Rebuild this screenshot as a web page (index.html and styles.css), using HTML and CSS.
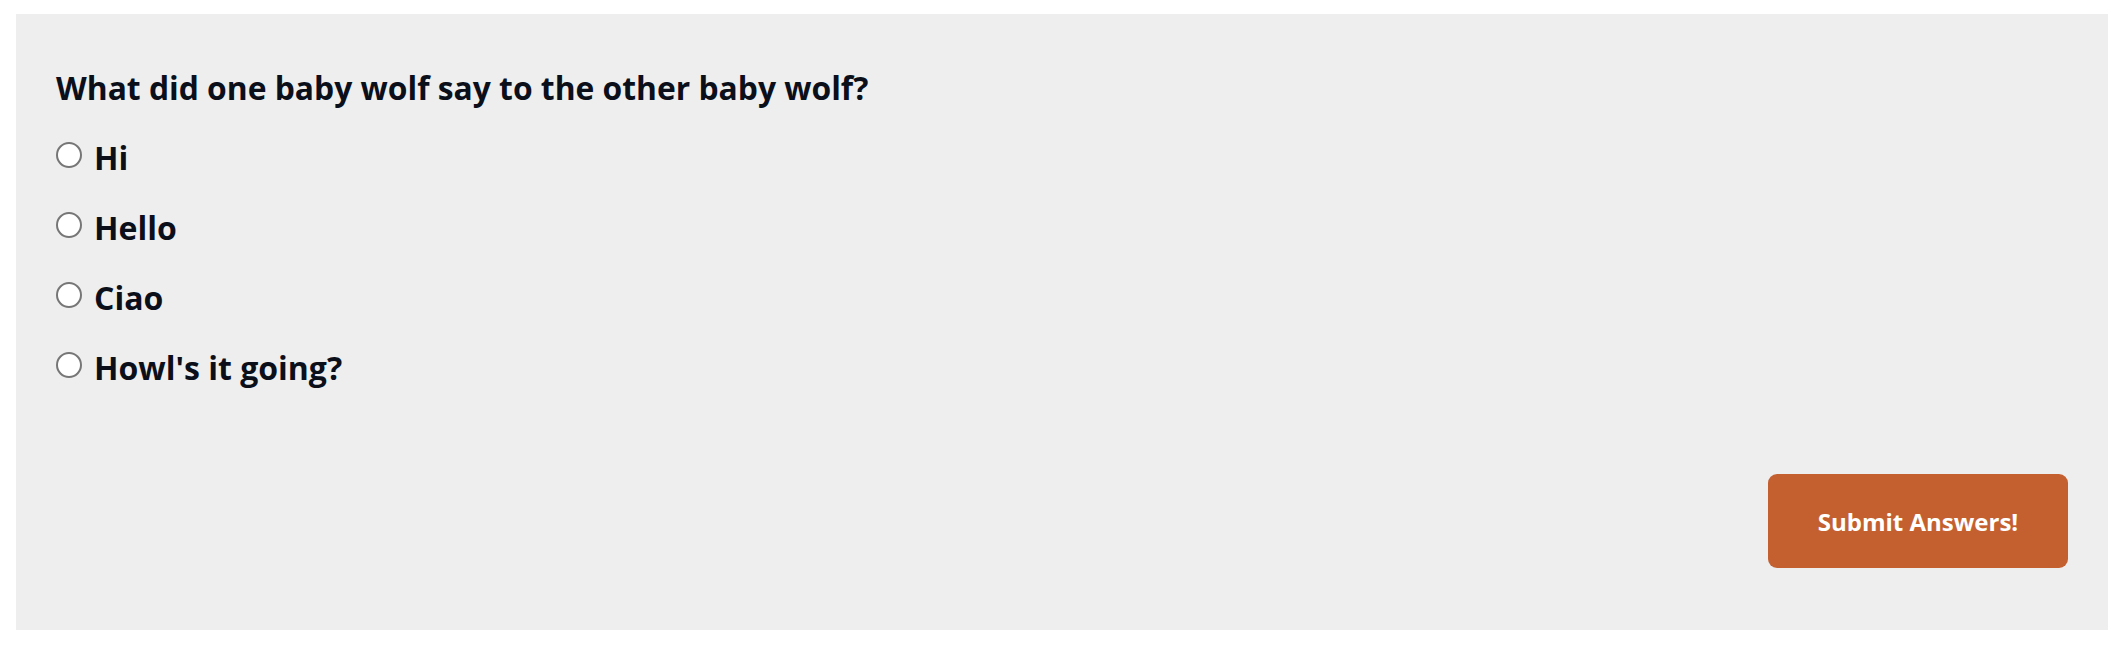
FILE: index.html
```html
<!DOCTYPE html>
<html lang="en">
<head>
<meta charset="utf-8">
<title>Quiz</title>
<link rel="stylesheet" href="styles.css">
</head>
<body>
<form class="quiz">
  <h2 class="question">What did one baby wolf say to the other baby wolf?</h2>
  <div class="options">
    <label class="option"><input type="radio" name="a" class="radio"><span>Hi</span></label>
    <label class="option"><input type="radio" name="a" class="radio"><span>Hello</span></label>
    <label class="option"><input type="radio" name="a" class="radio"><span>Ciao</span></label>
    <label class="option"><input type="radio" name="a" class="radio"><span>Howl's it going?</span></label>
  </div>
  <div class="actions">
    <button type="button" class="submit">Submit Answers!</button>
  </div>
</form>
</body>
</html>
```
FILE: styles.css
```css
html, body {
  margin: 0;
  padding: 0;
  background: #ffffff;
}
body {
  padding: 14px 16px 16px 16px;
  font-family: "Open Sans", "Liberation Sans", sans-serif;
  color: #0b0f1a;
}
.quiz {
  background: #eeeeee;
  height: 616px;
  box-sizing: border-box;
  padding: 52px 40px 62px 40px;
  display: flex;
  flex-direction: column;
}
.question {
  margin: 0;
  font-size: 31.8px;
  font-weight: 700;
  line-height: 44px;
}
.options {
  display: flex;
  flex-direction: column;
  gap: 26px;
  margin-top: 26px;
}
.option {
  display: flex;
  align-items: flex-start;
  gap: 12px;
  font-size: 32px;
  font-weight: 700;
  line-height: 44px;
}
.radio {
  appearance: none;
  -webkit-appearance: none;
  width: 26px;
  height: 26px;
  margin: 6px 0 0 0;
  border: 2px solid #767676;
  border-radius: 50%;
  background: #ffffff;
  box-sizing: border-box;
  flex: none;
}
.actions {
  margin-top: auto;
  display: flex;
  justify-content: flex-end;
}
.submit {
  width: 300px;
  height: 94px;
  border: none;
  border-radius: 9px;
  background: #c46030;
  color: #ffffff;
  font-family: "Open Sans", "Liberation Sans", sans-serif;
  font-weight: 700;
  font-size: 24px;
}
```
